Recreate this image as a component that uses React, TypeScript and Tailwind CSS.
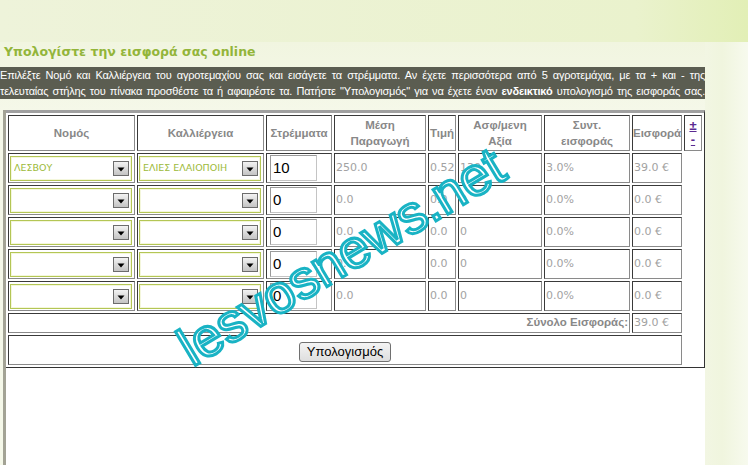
import React from "react";

type Row = { n: string; k: string; s: string; p: string; t: string; a: string; c: string; e: string };

const rows: Row[] = [
  { n: "ΛΕΣΒΟΥ", k: "ΕΛΙΕΣ ΕΛΑΙΟΠΟΙΗ", s: "10", p: "250.0", t: "0.52", a: "130", c: "3.0%", e: "39.0 €" },
  { n: "", k: "", s: "0", p: "0.0", t: "0.0", a: "0", c: "0.0%", e: "0.0 €" },
  { n: "", k: "", s: "0", p: "0.0", t: "0.0", a: "0", c: "0.0%", e: "0.0 €" },
  { n: "", k: "", s: "0", p: "0.0", t: "0.0", a: "0", c: "0.0%", e: "0.0 €" },
  { n: "", k: "", s: "0", p: "0.0", t: "0.0", a: "0", c: "0.0%", e: "0.0 €" },
];

function Sel({ text }: { text: string }) {
  return (
    <div className="flex h-[25px] w-[122px] items-center border border-[#b4c655] bg-white pl-[3px] pr-[2px] shadow-[inset_0_0_0_1px_#f4f7dc]">
      <span className="flex-1 overflow-hidden whitespace-nowrap font-['DejaVu_Sans',sans-serif] text-[9.5px] text-[#9dba3a]">
        {text}
      </span>
      <span className="flex h-[15px] w-[16px] items-end justify-center border border-[#6c6c6c] bg-[linear-gradient(#f2f2f2,#c4c4c4)] pb-[3px]">
        <svg width="8" height="5" viewBox="0 0 8 5">
          <path d="M0.5 0.5h7L4 4.5z" fill="#000" />
        </svg>
      </span>
    </div>
  );
}

const cell =
  "border border-t-[#3a3a3a] border-l-[#3a3a3a] border-r-[#8a8a8a] border-b-[#8a8a8a] p-0 align-middle";
const th = `${cell} text-center font-bold text-[#888888] font-['Liberation_Sans',Arial,sans-serif] text-[11.5px] leading-[16px] whitespace-nowrap`;
const val = `${cell} pl-px text-left font-['DejaVu_Sans',sans-serif] text-[11px] text-[#a2a2a2] whitespace-nowrap overflow-visible`;

export default function App() {
  return (
    <div className="relative flex h-[465px] w-[748px] flex-col overflow-hidden bg-[#f4f7e7]">
      <div className="h-[42px] shrink-0 bg-[linear-gradient(90deg,#eef3da,#eaf2cd_85%,#e2efb6)]" />
      <div className="flex min-h-0 flex-1">
        <div className="flex w-[705px] shrink-0 flex-col bg-[linear-gradient(#f1f5e0,#f5f8e9_70px)]">
          <h1 className="h-[25px] pl-[4px] font-['DejaVu_Sans',sans-serif] text-[12.5px] font-bold leading-[19px] text-[#93b53a]">
            Υπολογίστε την εισφορά σας online
          </h1>
          <div className="bg-[#5b5d51] font-['Liberation_Sans',Arial,sans-serif] text-[11px] leading-[16px] tracking-[-0.2px] text-white">
            <div className="text-justify [text-align-last:justify]">
              Επιλέξτε Νομό και Καλλιέργεια του αγροτεμαχίου σας και εισάγετε τα στρέμματα. Αν έχετε περισσότερα από 5 αγροτεμάχια, με τα + και - της
            </div>
            <div className="text-justify [text-align-last:justify]">
              τελευταίας στήλης του πίνακα προσθέστε τα ή αφαιρέστε τα. Πατήστε "Υπολογισμός" για να έχετε έναν{" "}
              <b>ενδεικτικό</b> υπολογισμό της εισφοράς σας.
            </div>
          </div>
          <div className="ml-[3px] mt-[11px] flex-1 border-l-[3px] border-[#a3a395] bg-white">
            <table className="w-full table-fixed border-separate border-spacing-[2px] border-t-[3px] border-r border-b border-t-[#a0a0a0] border-r-[#333333] border-b-[#333333]">
              <thead>
                <tr>
                  <th className={`${th} h-[36px] w-[127px]`}>Νομός</th>
                  <th className={`${th} w-[127px]`}>Καλλιέργεια</th>
                  <th className={`${th} w-[66px]`}>Στρέμματα</th>
                  <th className={`${th} w-[92px]`}>
                    Μέση
                    <br />
                    Παραγωγή
                  </th>
                  <th className={`${th} w-[28px]`}>Τιμή</th>
                  <th className={`${th} w-[84px]`}>
                    Ασφ/μενη
                    <br />
                    Αξία
                  </th>
                  <th className={`${th} w-[86px]`}>
                    Συντ.
                    <br />
                    εισφοράς
                  </th>
                  <th className={`${th} w-[50px]`}>Εισφορά</th>
                  <th className={`${cell} w-[18px] text-center font-['Liberation_Sans',Arial,sans-serif] text-[13px] leading-[14px] text-[#5a2a92]`}>
                    <div className="flex flex-col items-center">
                      <a className="underline">±</a>
                      <a className="underline">-</a>
                    </div>
                  </th>
                </tr>
              </thead>
              <tbody>
                {rows.map((r, i) => (
                  <tr key={i}>
                    <td className={`${cell} h-[30px] pl-px`}>
                      <Sel text={r.n} />
                    </td>
                    <td className={`${cell} pl-px`}>
                      <Sel text={r.k} />
                    </td>
                    <td className={`${cell} pl-[3px]`}>
                      <div className="flex h-[26px] w-[47px] items-center border border-t-[#9a9a9a] border-l-[#9a9a9a] border-r-[#c4c4c4] border-b-[#c4c4c4] bg-white pl-[2px] font-['Liberation_Sans',Arial,sans-serif] text-[15px] text-black">
                        {r.s}
                      </div>
                    </td>
                    <td className={val}>{r.p}</td>
                    <td className={val}>{r.t}</td>
                    <td className={val}>{r.a}</td>
                    <td className={val}>{r.c}</td>
                    <td className={val}>{r.e}</td>
                  </tr>
                ))}
                <tr>
                  <td
                    colSpan={7}
                    className={`${cell} h-[20px] pr-px text-right font-['Liberation_Sans',Arial,sans-serif] text-[11.5px] font-bold text-[#888888]`}
                  >
                    Σύνολο Εισφοράς:
                  </td>
                  <td className={val}>39.0 €</td>
                </tr>
                <tr>
                  <td colSpan={8} className={`${cell} h-[30px] text-center`}>
                    <button className="h-[20px] w-[92px] rounded-[3px] border border-[#707070] bg-[linear-gradient(#f4f4f4,#dedede)] font-['Liberation_Sans',Arial,sans-serif] text-[13px] leading-[18px] text-black">
                      Υπολογισμός
                    </button>
                  </td>
                </tr>
              </tbody>
            </table>
          </div>
        </div>
        <div className="flex-1 bg-[linear-gradient(90deg,#f2f6e3,#f0f5de_40%,#f7faee)]" />
      </div>
      <div className="pointer-events-none absolute left-[341px] top-[256px] -translate-x-1/2 -translate-y-1/2 rotate-[-31deg] whitespace-nowrap font-['Liberation_Sans',Arial,sans-serif] text-[54px] leading-none text-white [-webkit-text-stroke:3px_#19b3c4]">
        lesvosnews.net
      </div>
    </div>
  );
}
